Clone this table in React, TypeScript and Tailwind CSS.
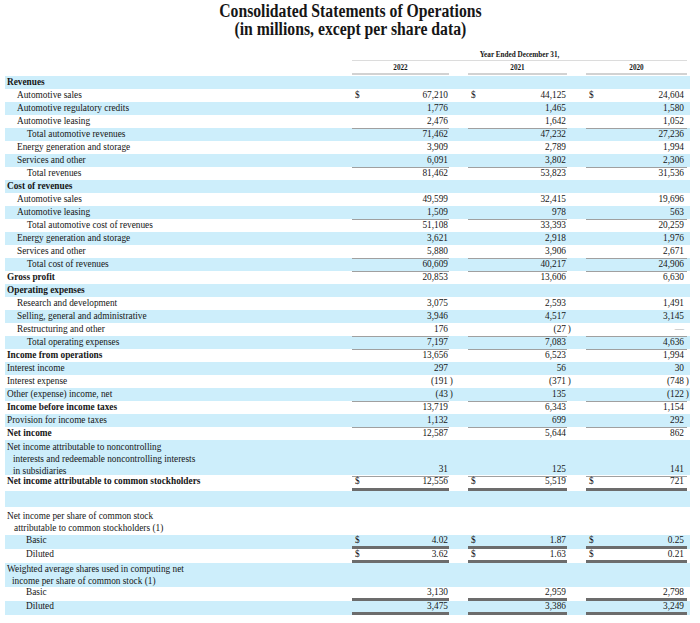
import clsx from 'clsx';

type Under = 'single' | 'double';
type Line = { text: string; pad: string };
type Row = {
    label?: string | Line[];
    pad?: string;
    bold?: boolean;
    vals?: string[];
    dollar?: boolean;
    under?: Under;
    h?: string;
};

const I0 = 'pl-[2px]';
const I1 = 'pl-[12px]';
const I2 = 'pl-[22px]';
const IB = 'pl-[21px]';

const rows: Row[] = [
    { label: 'Revenues', bold: true },
    { label: 'Automotive sales', pad: I1, dollar: true, vals: ['67,210', '44,125', '24,604'] },
    { label: 'Automotive regulatory credits', pad: I1, vals: ['1,776', '1,465', '1,580'] },
    { label: 'Automotive leasing', pad: I1, vals: ['2,476', '1,642', '1,052'], under: 'single' },
    { label: 'Total automotive revenues', pad: I2, vals: ['71,462', '47,232', '27,236'] },
    { label: 'Energy generation and storage', pad: I1, vals: ['3,909', '2,789', '1,994'] },
    { label: 'Services and other', pad: I1, vals: ['6,091', '3,802', '2,306'], under: 'single' },
    { label: 'Total revenues', pad: I2, vals: ['81,462', '53,823', '31,536'] },
    { label: 'Cost of revenues', bold: true },
    { label: 'Automotive sales', pad: I1, vals: ['49,599', '32,415', '19,696'] },
    { label: 'Automotive leasing', pad: I1, vals: ['1,509', '978', '563'], under: 'single' },
    { label: 'Total automotive cost of revenues', pad: I2, vals: ['51,108', '33,393', '20,259'] },
    { label: 'Energy generation and storage', pad: I1, vals: ['3,621', '2,918', '1,976'] },
    { label: 'Services and other', pad: I1, vals: ['5,880', '3,906', '2,671'], under: 'single' },
    { label: 'Total cost of revenues', pad: I2, vals: ['60,609', '40,217', '24,906'], under: 'single' },
    { label: 'Gross profit', bold: true, vals: ['20,853', '13,606', '6,630'] },
    { label: 'Operating expenses', bold: true },
    { label: 'Research and development', pad: I1, vals: ['3,075', '2,593', '1,491'] },
    { label: 'Selling, general and administrative', pad: I1, vals: ['3,946', '4,517', '3,145'] },
    { label: 'Restructuring and other', pad: I1, vals: ['176', '(27)', '—'], under: 'single' },
    { label: 'Total operating expenses', pad: I2, vals: ['7,197', '7,083', '4,636'], under: 'single' },
    { label: 'Income from operations', bold: true, vals: ['13,656', '6,523', '1,994'] },
    { label: 'Interest income', vals: ['297', '56', '30'] },
    { label: 'Interest expense', vals: ['(191)', '(371)', '(748)'] },
    { label: 'Other (expense) income, net', vals: ['(43)', '135', '(122)'], under: 'single' },
    { label: 'Income before income taxes', bold: true, vals: ['13,719', '6,343', '1,154'] },
    { label: 'Provision for income taxes', vals: ['1,132', '699', '292'], under: 'single' },
    { label: 'Net income', bold: true, vals: ['12,587', '5,644', '862'] },
    {
        label: [
            { text: 'Net income attributable to noncontrolling', pad: I0 },
            { text: 'interests and redeemable noncontrolling interests', pad: 'pl-[8px]' },
            { text: 'in subsidiaries', pad: 'pl-[8px]' },
        ],
        vals: ['31', '125', '141'],
        under: 'single',
        h: 'h-[35px] pt-[1px]',
    },
    {
        label: 'Net income attributable to common stockholders',
        bold: true,
        dollar: true,
        vals: ['12,556', '5,519', '721'],
        under: 'double',
        h: 'h-[16px]',
    },
    { h: 'h-[16px]' },
    {
        label: [
            { text: 'Net income per share of common stock', pad: I0 },
            { text: 'attributable to common stockholders (1)', pad: 'pl-[9px]' },
        ],
        h: 'h-[28px] pt-[3px]',
    },
    { label: 'Basic', pad: IB, dollar: true, vals: ['4.02', '1.87', '0.25'], under: 'double', h: 'h-[14px] leading-[11px]' },
    { label: 'Diluted', pad: IB, dollar: true, vals: ['3.62', '1.63', '0.21'], under: 'double', h: 'h-[14px] leading-[11px]' },
    {
        label: [
            { text: 'Weighted average shares used in computing net', pad: I0 },
            { text: 'income per share of common stock (1)', pad: 'pl-[7px]' },
        ],
        h: 'h-[24px]',
    },
    { label: 'Basic', pad: IB, vals: ['3,130', '2,959', '2,798'], under: 'double', h: 'h-[14px] leading-[11px]' },
    { label: 'Diluted', pad: IB, vals: ['3,475', '3,386', '3,249'], under: 'double', h: 'h-[14px] leading-[11px]' },
];

const COLS = 'grid grid-cols-[347px_97px_19px_99px_19px_101px_3px]';

function Amount({ value, dollar, under, last }: { value?: string; dollar?: boolean; under?: Under; last?: boolean }) {
    if (!value) return <div></div>;
    const neg = value.startsWith('(');
    const num = neg ? value.slice(0, -1) : value;
    return (
        <div
            className={clsx(
                'flex items-end justify-between pl-[3px]',
                last ? 'pr-[3px]' : 'pr-[1px]',
                under === 'single' && 'border-b border-[#a0a0a0]',
                under === 'double' && 'border-b-[3px] border-[#6c6c6c]',
            )}
        >
            <span>{dollar ? '$' : ''}</span>
            <span className={value === '—' ? 'text-[#b0b0b0]' : ''}>
                {num}
                {neg && <span className="inline-block w-0">&thinsp;)</span>}
            </span>
        </div>
    );
}

function StatementRow({ row, shaded }: { row: Row; shaded: boolean }) {
    return (
        <div className={clsx(COLS, row.h ?? 'h-[13px]', shaded ? 'bg-[#cdeefb]' : 'bg-white')}>
            <div className={clsx('whitespace-nowrap', row.bold && 'font-bold')}>
                {Array.isArray(row.label) ? (
                    row.label.map((l) => (
                        <div key={l.text} className={clsx('leading-[12px]', l.pad)}>
                            {l.text}
                        </div>
                    ))
                ) : (
                    <div className={row.pad ?? I0}>{row.label}</div>
                )}
            </div>
            <Amount value={row.vals?.[0]} dollar={row.dollar} under={row.under} />
            <div></div>
            <Amount value={row.vals?.[1]} dollar={row.dollar} under={row.under} />
            <div></div>
            <Amount value={row.vals?.[2]} dollar={row.dollar} under={row.under} last />
            <div></div>
        </div>
    );
}

export default function App() {
    return (
        <div className="w-[700px] h-[623px] overflow-hidden bg-white text-[#161616] font-['Liberation_Serif','Times_New_Roman',serif]">
            <div className="pt-[2px] text-center font-bold text-[18.5px] leading-[18px]">
                <div>
                    <span className="inline-block scale-x-[0.85]">Consolidated Statements of Operations</span>
                </div>
                <div>
                    <span className="inline-block scale-x-[0.85]">(in millions, except per share data)</span>
                </div>
            </div>

            <div className={clsx(COLS, 'ml-[5px] w-[685px] mt-[12px] text-[7.2px] font-bold')}>
                <div className="col-start-2 col-span-5 text-center leading-[10px] border-b border-[#dcdcdc]">
                    Year Ended December 31,
                </div>
                <div className="col-start-2 mt-[2px] text-center leading-[10px] border-b-2 border-[#d2d2d2]">2022</div>
                <div className="col-start-4 mt-[2px] text-center leading-[10px] border-b-2 border-[#d2d2d2]">2021</div>
                <div className="col-start-6 mt-[2px] text-center leading-[10px] border-b-2 border-[#d2d2d2]">2020</div>
            </div>

            <div className="ml-[5px] mt-[1px] w-[685px] text-[9.3px] leading-[13px]">
                {rows.map((row, i) => (
                    <StatementRow key={i} row={row} shaded={i % 2 === 0} />
                ))}
            </div>
        </div>
    );
}
